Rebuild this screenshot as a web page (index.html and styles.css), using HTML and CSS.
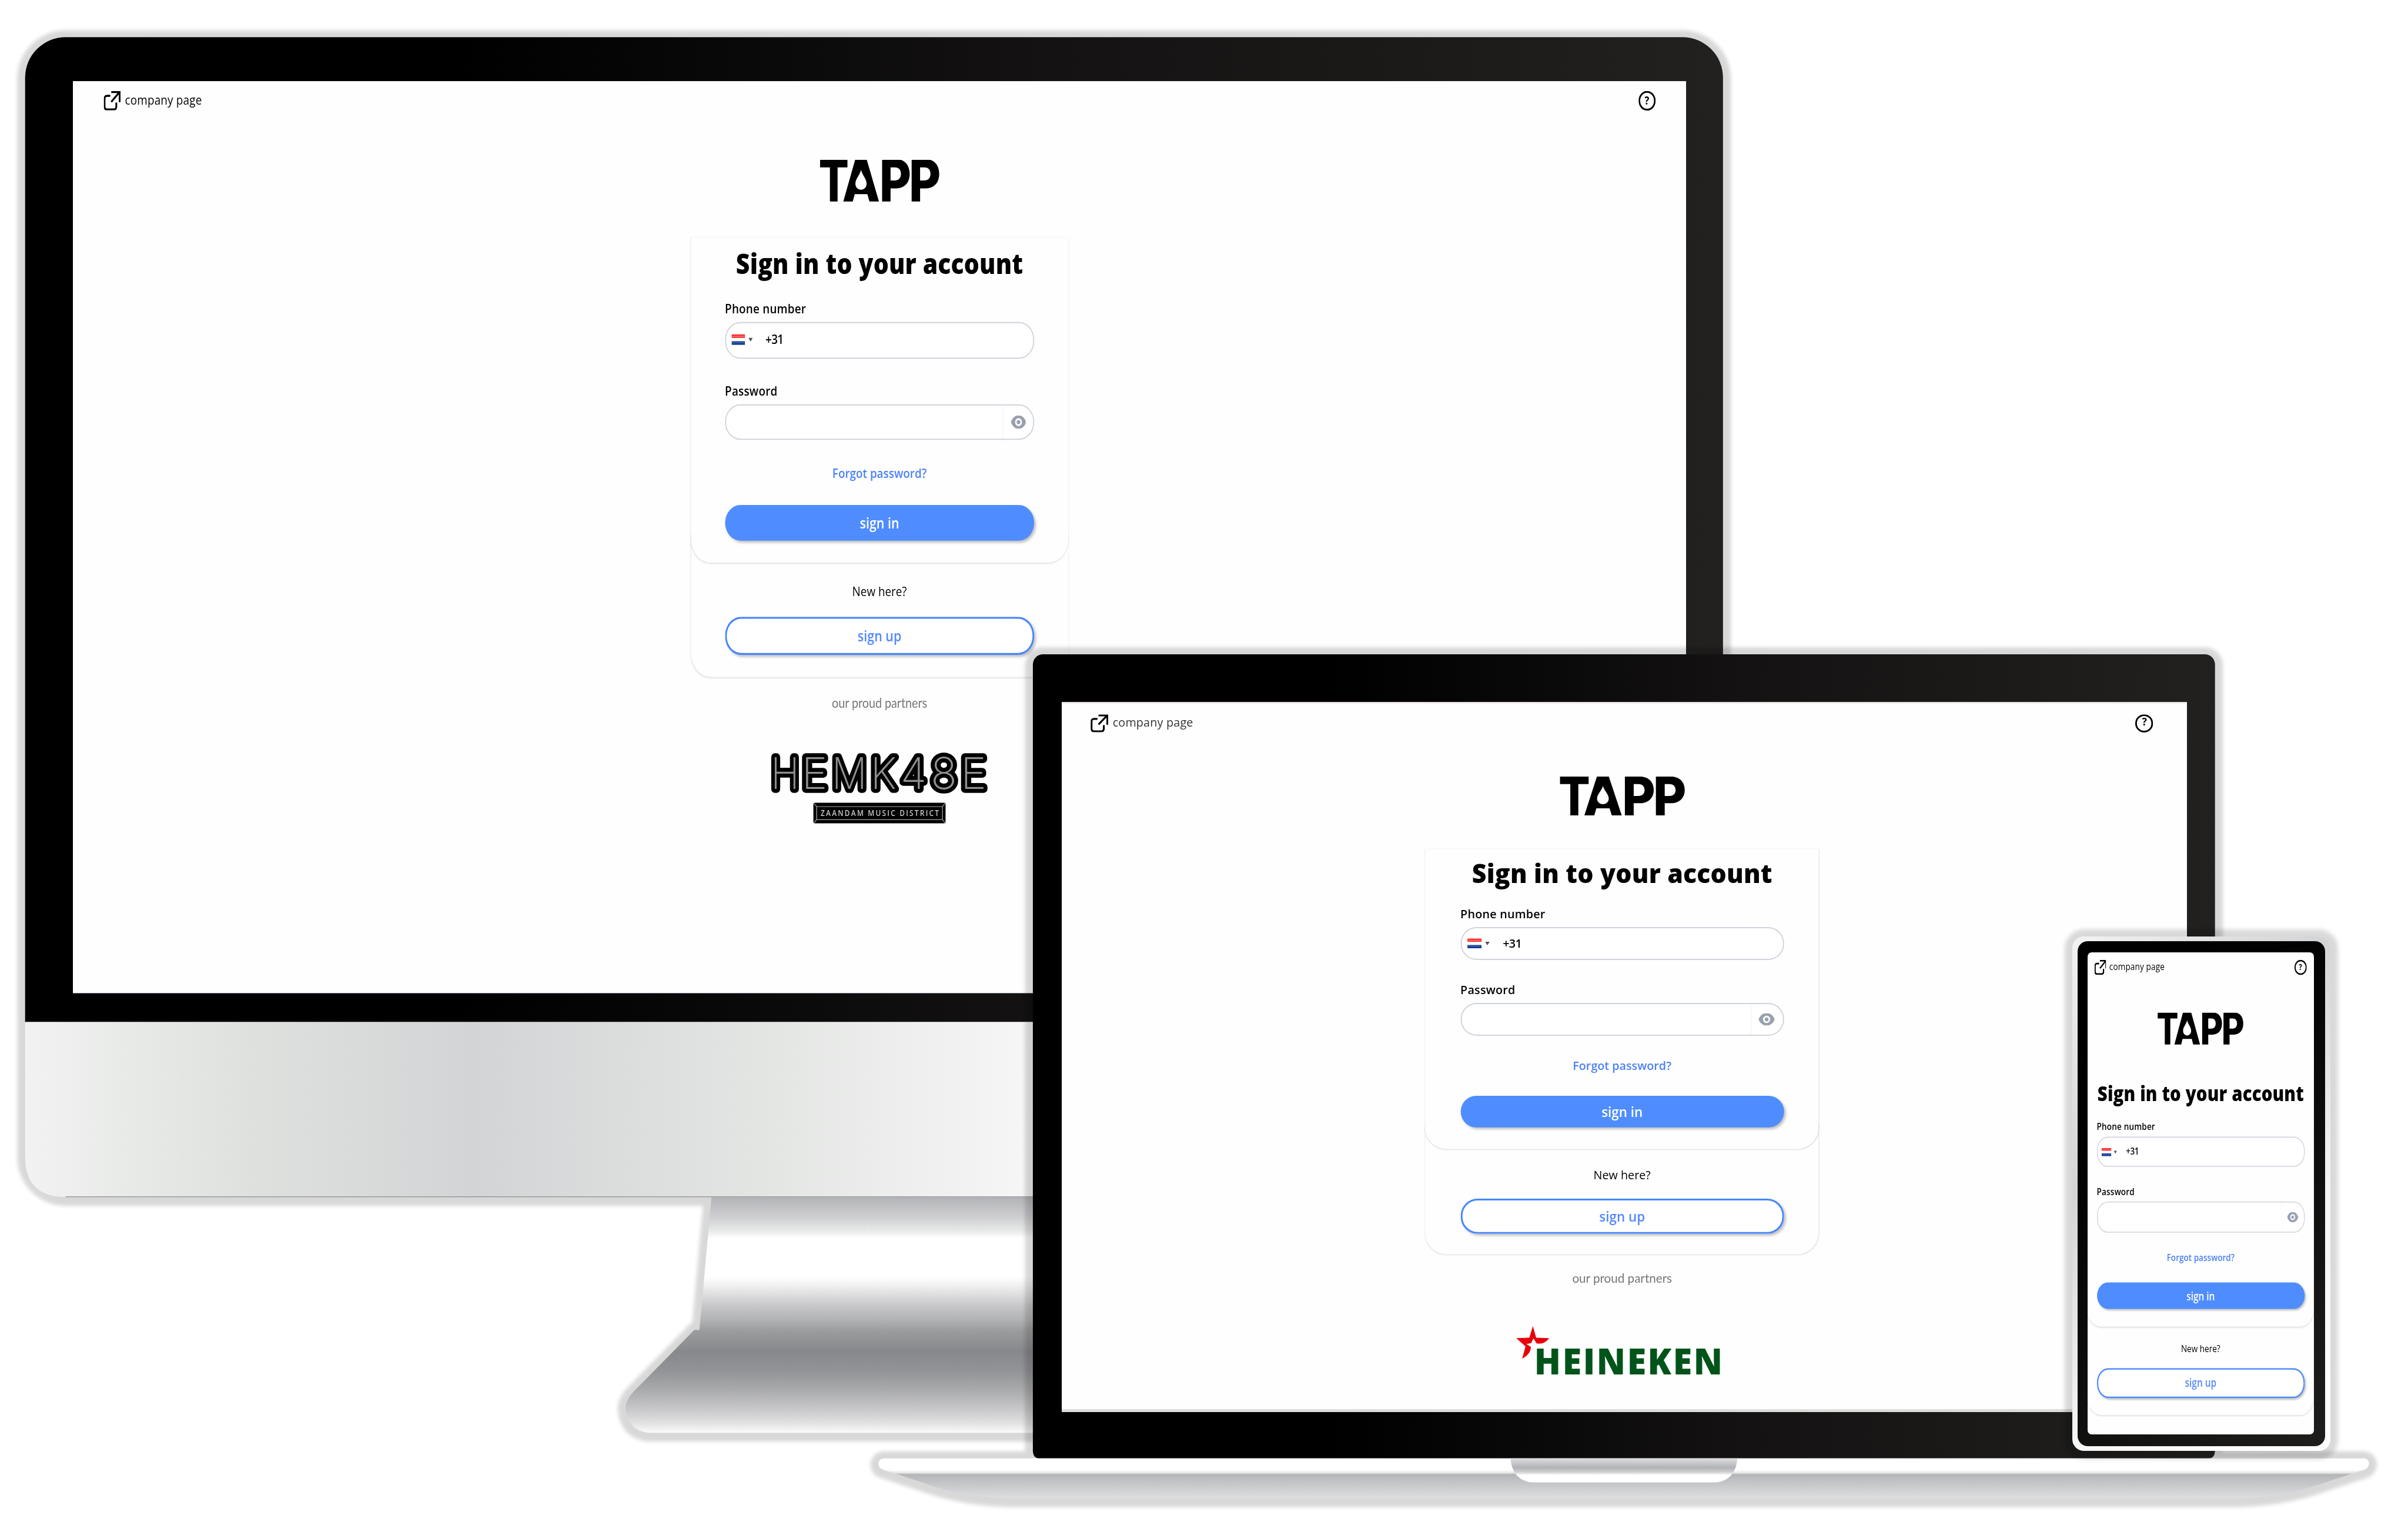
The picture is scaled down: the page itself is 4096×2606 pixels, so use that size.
FILE: index.html
```html
<!DOCTYPE html>
<html lang="en">
<head>
<meta charset="utf-8">
<title>TAPP sign in</title>
<link rel="stylesheet" href="styles.css">
</head>
<body>
<svg class="defs" aria-hidden="true">
  <defs>
    <symbol id="link" viewBox="0 0 20 20"><path d="M7.8 5H4Q1 5 1 8v8q0 3 3 3h8q3 0 3-3v-4M9 1.1h10V11.5M18.6 1.4 9 11.3" fill="none" stroke="#000" stroke-width="2.1"/></symbol>
    <symbol id="eye" viewBox="0 0 18.4 14"><path d="M0 7C1.8 2.6 5.2 0 9.2 0s7.400 2.600 9.200 7c-1.800 4.400-5.200 7-9.200 7S1.800 11.400 0 7z" fill="#99a1af"/><circle cx="9.200" cy="7" r="4.100" fill="#fff"/><circle cx="9.200" cy="7" r="2.200" fill="#99a1af"/></symbol>
    <symbol id="flag" viewBox="0 0 16 11"><path fill="#fff" d="M0 0h16v11H0z"/><path fill="#fb2320" d="M0 0h16v3.700H0z"/><path fill="#ff6a66" d="M.6 1.500h14.800v1.200H.6z"/><path fill="#11398c" d="M0 7.300h16V11H0z"/><path fill="#2f63ad" d="M.6 8.200h14.800v1.200H.6z"/></symbol>
    <symbol id="tapp" viewBox="0 0 143 43.400">
      <g class="wordmark">
        <text x="-1.200" y="43.300" textLength="36" lengthAdjust="spacingAndGlyphs">T</text>
        <text x="26.800" y="43.300" textLength="45.200" lengthAdjust="spacingAndGlyphs">A</text>
        <text x="71" y="43.300" textLength="38" lengthAdjust="spacingAndGlyphs">P</text>
        <text x="106.200" y="43.300" textLength="38" lengthAdjust="spacingAndGlyphs">P</text>
      </g>
      <path d="M45 4h8.500l6.500 31.400H38.600z"/>
      <path d="M49.300 10.400c1.500 5.500 6.600 9 6.600 14.200 0 3.700-3 6.200-6.600 6.200s-6.700-2.500-6.700-6.200c0-5.200 5.200-8.700 6.700-14.200z" fill="#fff"/>
    </symbol>
    <linearGradient id="bezel"><stop offset="0" stop-color="#000"/><stop offset=".25" stop-color="#000"/><stop offset=".6" stop-color="#141212"/><stop offset="1" stop-color="#22211f"/></linearGradient>
    <linearGradient id="chin" gradientUnits="userSpaceOnUse" x1="54" x2="2250" y1="0" y2="0"><stop offset="0" stop-color="#f2f2f2"/><stop offset=".09" stop-color="#e9ebe9"/><stop offset=".23" stop-color="#dee0de"/><stop offset=".44" stop-color="#d3d4d6"/><stop offset=".72" stop-color="#e3e5e3"/><stop offset="1" stop-color="#f7f7f7"/></linearGradient>
    <linearGradient id="stand" gradientUnits="userSpaceOnUse" x1="0" x2="0" y1="2574" y2="3081"><stop offset="0" stop-color="#b2b3b6"/><stop offset=".09" stop-color="#d0d0d3"/><stop offset=".145" stop-color="#e8ebe9"/><stop offset=".175" stop-color="#fff"/><stop offset=".34" stop-color="#fff"/><stop offset=".385" stop-color="#ececec"/><stop offset=".465" stop-color="#c6c6c9"/><stop offset=".525" stop-color="#b0b1b3"/><stop offset=".565" stop-color="#9c9d9f"/><stop offset=".655" stop-color="#87888b"/><stop offset=".74" stop-color="#939497"/><stop offset=".82" stop-color="#aaabac"/><stop offset=".9" stop-color="#c8c8ca"/><stop offset=".96" stop-color="#e2e2e3"/><stop offset="1" stop-color="#fbfbfb"/></linearGradient>
    <linearGradient id="base" gradientUnits="userSpaceOnUse" x1="0" x2="0" y1="3136" y2="3222"><stop offset="0" stop-color="#fff"/><stop offset=".29" stop-color="#fff"/><stop offset=".37" stop-color="#e4e4e4"/><stop offset=".4" stop-color="#b5b6b9"/><stop offset="1" stop-color="#dedfe1"/></linearGradient>
    <linearGradient id="notch" x1="0" x2="0" y1="0" y2="1"><stop offset="0" stop-color="#dedee1"/><stop offset=".38" stop-color="#b2b3b6"/><stop offset=".55" stop-color="#cbcbcd"/><stop offset=".7" stop-color="#fff"/><stop offset="1" stop-color="#fff"/></linearGradient>
    <filter id="soft" filterUnits="userSpaceOnUse" x="0" y="0" width="5178" height="3294"><feGaussianBlur stdDeviation="4"/></filter>
    <path id="stand-shape" d="M1530 2574 1504 2860H1493L1364 2991Q1345 3010 1345 3029Q1350 3076 1393 3081H2400V2574z"/>
    <path id="base-shape" d="M1900 3136H5083Q5094 3137 5094 3147Q5093 3157 5085 3160Q5020 3181 4985 3193Q4900 3222 4800 3222H2183Q2083 3222 1998 3193Q1963 3181 1898 3160Q1889 3156 1889 3147Q1890 3137 1900 3136z"/>
  </defs>
</svg>

<main class="stage">
  <section class="device">
    <svg class="hardware" viewBox="0 0 5178 3294">
      <g class="halo" filter="url(#soft)"><rect x="54" y="80" width="3651" height="2494" rx="87"/><use href="#stand-shape"/></g>
      <use href="#stand-shape" fill="url(#stand)"/>
      <path d="M54 2197H3705V2487Q3705 2574 3618 2574H141Q54 2574 54 2487z" fill="url(#chin)"/>
      <path d="M141 2573.500H2300" stroke="#999b9b" stroke-width="2"/>
      <path d="M54 2197.500V167A87 87 0 0 1 141 80H3618A87 87 0 0 1 3705 167V2197.500z" fill="url(#bezel)"/>
    </svg>
    <div class="screen screen-desktop">
      <div class="page">
        <header class="topbar"><a class="company"><svg><use href="#link"/></svg>company page</a><span class="help">?</span></header>
        <svg class="logo"><use href="#tapp"/></svg>
        <form class="card sign-in">
          <h1>Sign in to your account</h1>
          <label>Phone number</label>
          <div class="field phone"><svg class="flag"><use href="#flag"/></svg><i class="caret"></i><span>+31</span></div>
          <label>Password</label>
          <div class="field password"><div class="reveal"><svg><use href="#eye"/></svg></div></div>
          <a class="forgot">Forgot password?</a>
          <div class="button solid">sign in</div>
        </form>
        <div class="card sign-up"><p>New here?</p><div class="button outline">sign up</div></div>
        <p class="partners">our proud partners</p>
        <svg class="hemkade" viewBox="152 423 1170 455" preserveAspectRatio="none">
          <text class="letters" y="655"><tspan x="146" textLength="156" lengthAdjust="spacingAndGlyphs">H</tspan><tspan x="313" textLength="142" lengthAdjust="spacingAndGlyphs">E</tspan><tspan x="478" textLength="192" lengthAdjust="spacingAndGlyphs">M</tspan><tspan x="688" textLength="142" lengthAdjust="spacingAndGlyphs">K</tspan><tspan x="852" textLength="142" lengthAdjust="spacingAndGlyphs">4</tspan><tspan x="1016" textLength="144" lengthAdjust="spacingAndGlyphs">8</tspan><tspan x="1178" textLength="142" lengthAdjust="spacingAndGlyphs">E</tspan></text>
          <rect x="378" y="743" width="719" height="133" rx="8"/>
          <path d="M382 747 396 768H1080L1094 747M396 768V852L382 872M396 852H1080L1094 872M1080 768V852" fill="none" stroke="#8a8a8a" stroke-width="5"/>
          <text class="district" transform="scale(.68 1)" x="614.700" y="828" textLength="945" lengthAdjust="spacing">ZAANDAM MUSIC DISTRICT</text>
        </svg>
      </div>
    </div>
  </section>

  <section class="device">
    <svg class="hardware" viewBox="0 0 5178 3294">
      <g class="halo" filter="url(#soft)"><rect x="2221" y="1407" width="2542" height="1729" rx="22"/><use href="#base-shape"/></g>
      <path d="M2221 1429A22 22 0 0 1 2243 1407H4741A22 22 0 0 1 4763 1429V3120Q4762 3136 4750 3136H2234Q2222 3136 2221 3120z" fill="url(#bezel)"/>
      <use href="#base-shape" fill="url(#base)"/>
      <path d="M3248 3136H3736Q3732 3184 3688 3188H3296Q3252 3184 3248 3136z" fill="url(#notch)"/>
    </svg>
    <div class="screen screen-laptop">
      <div class="page">
        <header class="topbar"><a class="company"><svg><use href="#link"/></svg>company page</a><span class="help">?</span></header>
        <svg class="logo"><use href="#tapp"/></svg>
        <form class="card sign-in">
          <h1>Sign in to your account</h1>
          <label>Phone number</label>
          <div class="field phone"><svg class="flag"><use href="#flag"/></svg><i class="caret"></i><span>+31</span></div>
          <label>Password</label>
          <div class="field password"><div class="reveal"><svg><use href="#eye"/></svg></div></div>
          <a class="forgot">Forgot password?</a>
          <div class="button solid">sign in</div>
        </form>
        <div class="card sign-up"><p>New here?</p><div class="button outline">sign up</div></div>
        <p class="partners">our proud partners</p>
        <svg class="heineken" viewBox="330 715 690 210" preserveAspectRatio="none">
          <path d="M330 765 374 763 386 713 397 763 441 765Q430 784 414 788L399 788 388 766 380 786 364 790 379 802Q380 832 350 853L361 800z" fill="#e8000c"/>
          <text transform="scale(.74 1)" x="528" y="922" textLength="857" lengthAdjust="spacing">HEINEKEN</text>
        </svg>
      </div>
    </div>
  </section>

  <section class="device">
    <div class="handset">
      <div class="handset-bezel">
        <div class="screen screen-phone">
          <div class="page">
            <header class="topbar"><a class="company"><svg><use href="#link"/></svg>company page</a><span class="help">?</span></header>
            <svg class="logo"><use href="#tapp"/></svg>
            <form class="card sign-in">
              <h1>Sign in to your account</h1>
              <label>Phone number</label>
              <div class="field phone"><svg class="flag"><use href="#flag"/></svg><i class="caret"></i><span>+31</span></div>
              <label>Password</label>
              <div class="field password"><div class="reveal"><svg><use href="#eye"/></svg></div></div>
              <a class="forgot">Forgot password?</a>
              <div class="button solid">sign in</div>
            </form>
            <div class="card sign-up"><p>New here?</p><div class="button outline">sign up</div></div>
          </div>
        </div>
      </div>
    </div>
  </section>
</main>
</body>
</html>
```
FILE: styles.css
```css
* { box-sizing: border-box; }

html { overflow: hidden; }
body {
  margin: 0;
  width: 4096px;
  height: 2606px;
  overflow: hidden;
  background: #fff;
  font-family: "Open Sans", "Noto Sans", sans-serif;
  color: #000;
}

svg { display: block; }
.defs { position: absolute; width: 0; height: 0; }

/* The mock-up is drawn on a 5178 x 3294 canvas */
.stage {
  position: relative;
  width: 5177.500px;
  height: 3293.500px;
  overflow: hidden;
  zoom: 0.79104;
}

.device { position: absolute; inset: 0; }
.hardware { width: 5178px; height: 3294px; }
.halo { fill: #000; stroke: #000; stroke-width: 34px; opacity: 0.15; transform: translateY(2px); }

.screen { overflow: hidden; background: #fefefe; }
.screen-desktop {
  position: absolute; left: 157px; top: 174px; width: 3469px; height: 1962px;
  border-bottom: 2px solid #6d7480;
  --w: 1920px; --kx: 1.8068; --ky: 2.09;
  --left: 37px; --right: 36.5px; --shift: 0px; --top: 0px;
}
.screen-laptop {
  position: absolute; left: 2283px; top: 1510px; width: 2419.600px; height: 1527px;
  border-bottom: 7px solid #dddedb;
  box-shadow: inset 0 5px 3px -3px #d8d0ce;
  --w: 1280px; --kx: 1.8903; --ky: 1.925;
  --left: 33px; --right: 38px; --shift: 5px; --top: 3.5px;
}
.screen-phone {
  height: 1037px;
  border-radius: 9px;
  --w: 375px; --kx: 1.2987; --ky: 1.6;
  --left: 10.900px; --right: 12.200px; --shift: 1.6px; --top: 0px;
}

.handset {
  position: absolute; left: 4456px; top: 2014px; width: 555px; height: 1106px;
  padding: 10.500px 11px;
  border-radius: 25px;
  background: linear-gradient(135deg, #f3f3f3, #d3d4d6 33%, #f6f6f6 66%, #fff);
  box-shadow: 0 1px 9px 16px rgba(0, 0, 0, 0.15);
}
.handset-bezel {
  height: 1085.500px;
  padding: 23.500px 24px 24px 22px;
  border-radius: 22px;
  background: linear-gradient(135deg, #000, #030303 33%, #1f1e1c);
}

/* Page, shared by the three screens */
.page {
  display: flex;
  flex-direction: column;
  align-items: center;
  width: var(--w);
  padding-top: var(--top);
  transform: scale(var(--kx), var(--ky));
  transform-origin: 0 0;
  font-size: 13.200px;
  line-height: 20px;
}
.page > :not(.topbar) { translate: calc(var(--shift) / -2) 0; }
.page p, .page h1 { margin: 0; }

.topbar {
  display: flex;
  justify-content: space-between;
  align-items: center;
  width: 100%;
  height: 40.500px;
  padding: 0 var(--right) 0 var(--left);
}
.company { display: flex; align-items: center; gap: 5px; letter-spacing: 0.130px; }
.company svg { width: 20px; height: 20px; }
.screen-laptop .company { color: #333; }
.help {
  display: grid;
  place-items: center;
  width: 20.500px;
  height: 20px;
  border-radius: 50%;
  box-shadow: inset 0 0 0 1.900px #000;
  font-size: 11.500px;
  font-weight: 700;
  line-height: 16px;
}

.logo { width: 143px; height: 43.400px; margin-top: 40px; }
.wordmark { font: 800 59.500px Inter, sans-serif; }

.card {
  display: flex;
  flex-direction: column;
  align-items: stretch;
  width: 448px;
  padding: 0 40px 23.500px;
  border-radius: 0 0 24px 24px;
  background: #fefefe;
  box-shadow: 0 1px 2px rgba(0, 0, 0, 0.1), 0 0 1px rgba(0, 0, 0, 0.06);
}
.sign-in { position: relative; z-index: 1; margin-top: 36.800px; padding-top: 10px; }
.sign-up { margin-top: -30px; padding: 50.200px 40px 23px; text-align: center; }

.card h1 {
  align-self: center;
  margin: 0 -8px 17.900px;
  white-space: nowrap;
  font-size: 28.600px;
  font-weight: 800;
  line-height: 36px;
  letter-spacing: 0.150px;
}
.card label { font-weight: 600; letter-spacing: 0.150px; margin-bottom: 3px; }

.field {
  display: flex;
  align-items: center;
  height: 37.500px;
  margin-bottom: 24.200px;
  border: 1px solid #cfd3db;
  border-radius: 18px;
  background: #fff;
}
.phone { padding-left: 6.800px; font-weight: 600; }
.flag { width: 16.200px; height: 11px; }
.caret {
  margin-left: 4px;
  border: 3px solid transparent;
  border-top: 4px solid #555;
  border-bottom: 0;
}
.phone span { margin-left: 15px; letter-spacing: -0.5px; }
.password { justify-content: flex-end; }
.reveal {
  display: grid;
  place-items: center;
  width: 37px;
  height: 100%;
  border-left: 1px solid #f8f8f8;
}
.reveal svg { width: 18.400px; height: 14px; }

.forgot {
  align-self: center;
  margin-bottom: 22.500px;
  color: #4a80f8;
  font-weight: 560;
}

.button {
  border-radius: 19px;
  box-shadow: 2px 2px 3px rgba(0, 0, 0, 0.25);
  font-size: 15px;
  text-align: center;
}
.solid { height: 35.800px; line-height: 35.800px; background: #4f8dff; color: #fff; font-weight: 600; }
.outline {
  height: 39.300px;
  margin-top: 15.400px;
  background: #fff;
  box-shadow: inset 0 0 0 2px #4385ff, 2px 2px 3px rgba(0, 0, 0, 0.25);
  color: #5388fb;
  font-weight: 560;
  line-height: 39.600px;
}

.partners {
  padding-top: 16.200px;
  color: #757575;
  font-family: Lato, sans-serif;
  font-size: 13.800px;
}
.hemkade { width: 256px; height: 72.500px; margin-top: 41.300px; overflow: visible; }
.letters {
  font: 200 282px Inter, sans-serif;
  fill: #8f8f8f;
  stroke: #000;
  stroke-width: 52px;
  stroke-linejoin: round;
  paint-order: stroke;
}
.district { font: 600 56px "Open Sans", sans-serif; fill: #c9c9c9; }
.heineken { width: 233px; height: 54.500px; margin: 44.300px 9px 0 0; overflow: visible; }
.heineken text { font: 800 158px "Open Sans", sans-serif; fill: #00541a; }

/* Narrow viewport: full-width card, slightly taller controls */
.screen-phone .card { width: 375px; padding-left: 16px; padding-right: 15px; }
.screen-phone .sign-in { padding-top: 10.800px; }
.screen-phone .phone { height: 39.800px; }
.screen-phone .password { height: 41.800px; }
.screen-phone .outline { height: 40px; }
```
